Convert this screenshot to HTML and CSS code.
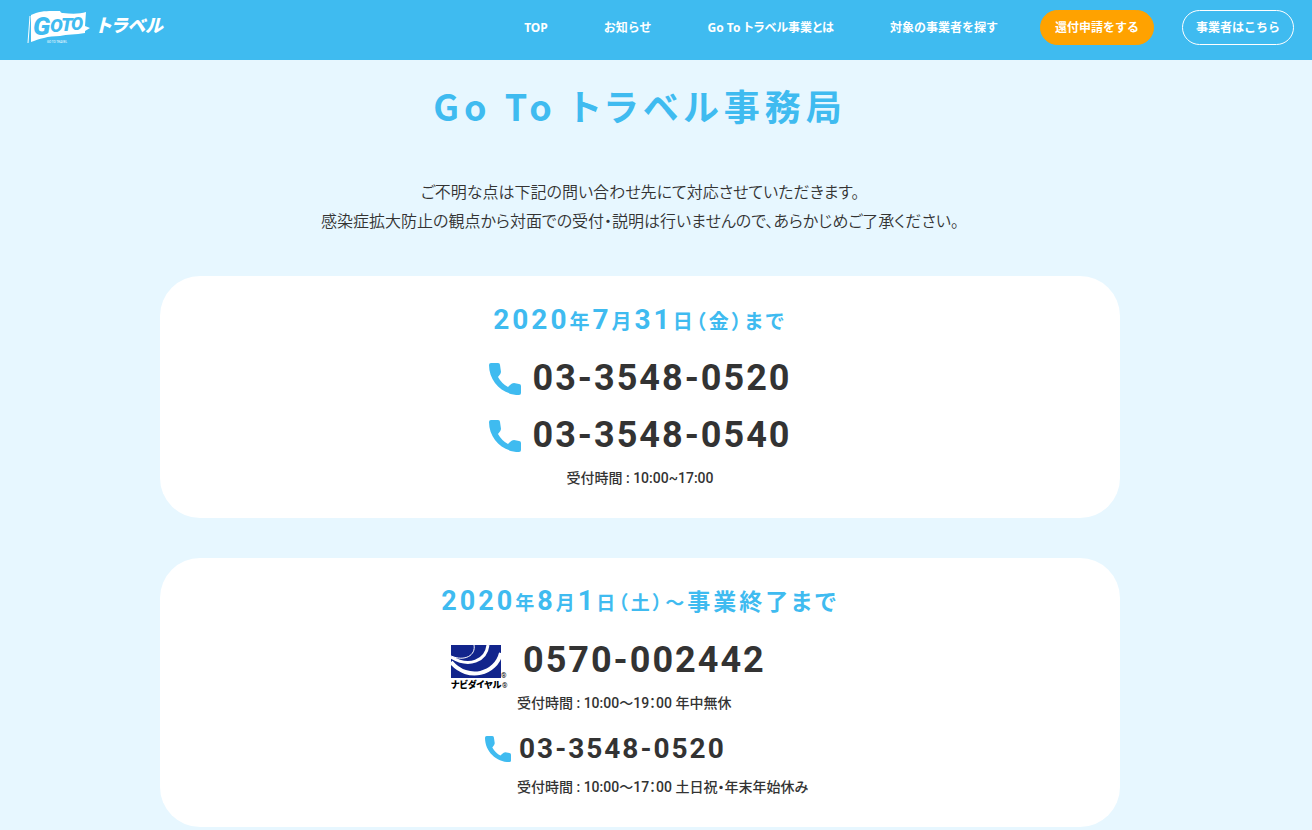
FILE: index.html
```html
<!DOCTYPE html>
<html lang="ja">
<head>
    <meta charset="UTF-8">
    <meta name="viewport" content="width=device-width, initial-scale=1.0">
    <title>Go To トラベル事務局</title>
    <link rel="stylesheet" href="styles.css">
</head>
<body>

    <!-- Header -->
    <header class="header">
        <a class="logo" href="#" aria-label="Go To トラベル">
            <svg class="logo-flag" width="66" height="38" viewBox="0 0 66 38">
                <path d="M5 5 C14 0 25 1 34 1 C35 3 36 3 37 3 C46 4 54 4 60 2 L59 16 L64 18 L59 21 L59 23 C50 25 41 24 34 26 C22 26 13 29 5 32 Z" fill="#fff"/>
                <path d="M4 6 L2 33" fill="none" stroke="#fff"/>
                <g class="logo-goto">
                    <text x="7" y="25" font-size="26">G</text>
                    <text x="24" y="22" font-size="19">O</text>
                    <text x="35" y="21" font-size="19">T</text>
                    <text x="45" y="20" font-size="18">O</text>
                </g>
                <text class="logo-sub" x="21" y="33">GO TO TRAVEL</text>
            </svg>
            <span class="logo-text">トラベル</span>
        </a>
        <nav class="nav">
            <a class="nav-link" href="#">TOP</a>
            <a class="nav-link" href="#">お知らせ</a>
            <a class="nav-link about" href="#">Go To トラベル事業とは</a>
            <a class="nav-link" href="#">対象の事業者を探す</a>
            <a class="nav-button refund" href="#">還付申請をする</a>
            <a class="nav-button" href="#">事業者はこちら</a>
        </nav>
    </header>

    <!-- Contact -->
    <main class="contact">
        <h1>Go To トラベル事務局</h1>
        <p class="lead">
            ご不明な点は下記の問い合わせ先にて対応させていただきます。<br>
            感染症拡大防止の観点から対面での受付・説明は行いませんので、あらかじめご了承ください。
        </p>

        <section class="card">
            <h2><b>2020</b>年<b>7</b>月<b>31</b>日（金）まで</h2>
            <a class="tel" href="tel:0335480520">
                <svg class="tel-icon" viewBox="0 0 32 32"><path d="M2 0 H9 Q11 0 11 2 L12 9 Q12 11 9 14 Q13 21 19 24 L21 22 Q23 20 25 20 L30 21 Q32 21 32 23 V30 Q32 32 30 32 C14 32 0 19 0 2 Q0 0 2 0 Z"/></svg>
                <span>03-3548-0520</span>
            </a>
            <a class="tel" href="tel:0335480540">
                <svg class="tel-icon" viewBox="0 0 32 32"><path d="M2 0 H9 Q11 0 11 2 L12 9 Q12 11 9 14 Q13 21 19 24 L21 22 Q23 20 25 20 L30 21 Q32 21 32 23 V30 Q32 32 30 32 C14 32 0 19 0 2 Q0 0 2 0 Z"/></svg>
                <span>03-3548-0540</span>
            </a>
            <p class="hours">受付時間 : 10:00~17:00</p>
        </section>

        <section class="card">
            <h2 class="from-august"><b>2020</b>年<b>8</b>月<b>1</b>日（土）～<span>事業終了まで</span></h2>
            <div class="dial">
                <svg class="navi-logo" width="58" height="48" viewBox="0 0 58 48" role="img" aria-label="ナビダイヤル">
                    <rect width="50" height="33" fill="#12258c"/>
                    <g fill="none" stroke="#fff">
                        <path d="M0 11 C14 17 25 10 23 0" stroke-width="1"/>
                        <path d="M0 12 C18 23 35 16 37 0" stroke-width="3"/>
                        <path d="M0 17 C17 37 45 29 50 8" stroke-width="4"/>
                    </g>
                    <text class="navi-name" x="0" y="43">ナビダイヤル</text>
                    <text class="navi-mark" x="50" y="33">®</text>
                    <text class="navi-mark" x="51" y="43">®</text>
                </svg>
                <a class="tel navi-tel" href="tel:0570002442">0570-002442</a>
                <p class="hours">受付時間 : 10:00～19：00 年中無休</p>
                <svg class="tel-icon small" viewBox="0 0 32 32"><path d="M2 0 H9 Q11 0 11 2 L12 9 Q12 11 9 14 Q13 21 19 24 L21 22 Q23 20 25 20 L30 21 Q32 21 32 23 V30 Q32 32 30 32 C14 32 0 19 0 2 Q0 0 2 0 Z"/></svg>
                <a class="tel small-tel" href="tel:0335480520">03-3548-0520</a>
                <p class="hours">受付時間 : 10:00～17：00 土日祝・年末年始休み</p>
            </div>
        </section>
    </main>

</body>
</html>
```

FILE: styles.css
```css
/* Reset and basic styles */
* {
    box-sizing: border-box;
}

html, body {
    padding: 0;
    margin: 0;
    background: #e7f7ff;
    color: #333;
    font-family: "Noto Sans CJK JP", sans-serif;
    font-feature-settings: "palt";
}

h1, h2, p {
    margin: 0;
}

a {
    color: inherit;
    text-decoration: none;
}

/* Header */
.header {
    display: flex;
    justify-content: space-between;
    height: 60px;
    padding: 10px 18px 0 26px;
    background: #3fbbf0;
    color: white;
}

.logo {
    display: flex;
    gap: 4px;
}

.logo-goto {
    fill: #3fbbf0;
    font-family: Roboto, sans-serif;
    font-weight: 900;
    font-style: italic;
}

.logo-sub {
    fill: white;
    font-family: Roboto, sans-serif;
    font-size: 3px;
}

.logo-text {
    font-size: 18px;
    line-height: 28px;
    font-weight: 900;
    font-style: italic;
}

/* Navigation */
.nav {
    display: flex;
    align-items: center;
    height: 35px;
    font-family: "Noto Sans", "Noto Sans CJK JP", sans-serif;
    font-size: 12px;
    font-weight: bold;
    line-height: 33px;
    font-feature-settings: normal;
    white-space: nowrap;
}

.nav-link {
    padding: 0 28px;
}

.nav-link.about {
    font-feature-settings: "palt";
}

.nav-button {
    margin-left: 28px;
    padding: 0 13px;
    border: 1px solid white;
    border-radius: 18px;
}

.nav-button.refund {
    margin-left: 14px;
    padding: 0 14px;
    background: #ffa200;
    border-color: #ffa200;
}

/* Contact */
.contact {
    max-width: 1280px;
    padding: 18px 20px 0;
    text-align: center;
}

h1 {
    color: #3fbbf0;
    font-size: 36px;
    font-weight: bold;
    line-height: 54px;
    letter-spacing: 5px;
}

.lead {
    margin: 45px 0 41px;
    font-size: 16px;
    font-weight: 350;
    line-height: 29px;
}

/* Cards */
.card {
    display: flex;
    flex-direction: column;
    align-items: center;
    max-width: 960px;
    padding: 26px 20px 26px;
    margin: 0 auto;
    background: white;
    border-radius: 40px;
}

.card + .card {
    margin-top: 40px;
    padding: 24px 20px 26px;
}

h2 {
    margin-bottom: 11px;
    color: #3fbbf0;
    font-size: 20px;
    font-weight: bold;
    line-height: 36px;
    letter-spacing: 3px;
}

h2 b {
    font-family: Roboto, sans-serif;
    font-size: 28px;
    font-weight: bold;
}

.from-august {
    margin-bottom: 12px;
    font-size: 19px;
}

.from-august b {
    font-size: 27px;
}

.from-august span {
    font-size: 23px;
}

/* Phone numbers */
.tel {
    display: flex;
    align-items: center;
    gap: 12px;
    font-family: Roboto, sans-serif;
    font-size: 36px;
    font-weight: bold;
    line-height: 57px;
    letter-spacing: 2px;
}

.tel-icon {
    width: 32px;
    height: 32px;
    fill: #3fbbf0;
}

.hours {
    font-family: Roboto, "Noto Sans CJK JP", sans-serif;
    font-size: 14px;
    font-weight: 500;
    line-height: 28px;
}

/* Navi dial block */
.dial {
    display: grid;
    grid-template-columns: 60px 312px;
    column-gap: 6px;
    align-items: center;
    text-align: left;
}

.dial .hours {
    grid-column: 2;
}

.dial .navi-tel + .hours {
    margin-bottom: 8px;
}

.navi-logo {
    align-self: end;
    margin-bottom: -4px;
}

.navi-name {
    font-size: 9px;
    font-weight: 900;
}

.navi-mark {
    font-family: Roboto, sans-serif;
    font-size: 7px;
}

.navi-tel {
    padding-left: 6px;
}

.tel-icon.small {
    width: 26px;
    height: 26px;
    justify-self: end;
}

.small-tel {
    padding-left: 2px;
    font-size: 28px;
    line-height: 48px;
}
```
